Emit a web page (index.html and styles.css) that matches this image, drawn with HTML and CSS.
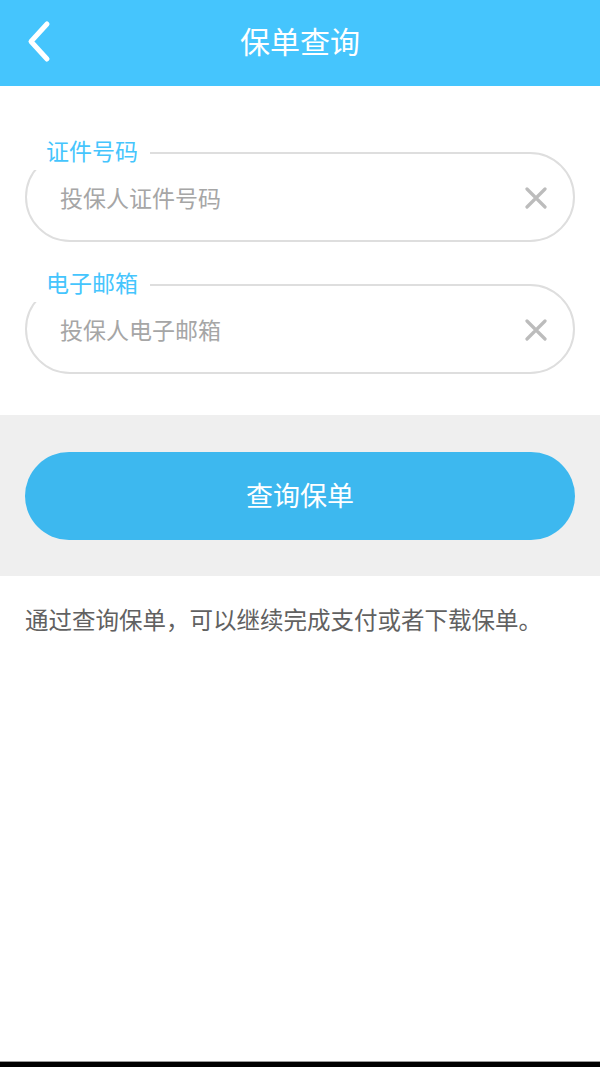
FILE: index.html
```html
<!DOCTYPE html>
<html>
<head>
    <meta charset="utf-8">
    <title>保单查询</title>
    <link rel="stylesheet" href="styles.css">
</head>
<body>
    <div class="page">
        <div class="header">
            <a class="back" href="#">
                <svg width="30" height="44" viewBox="0 0 30 44">
                    <polyline points="20,4 4,21.5 20,39" fill="none" stroke="#fff" stroke-width="5" stroke-linecap="round" stroke-linejoin="round"/>
                </svg>
            </a>
            <h1>保单查询</h1>
        </div>

        <div class="form-area">
            <div class="field">
                <label class="field-label" for="id-number">证件号码</label>
                <div class="pill">
                    <input type="text" id="id-number" placeholder="投保人证件号码">
                    <span class="clear">
                        <svg width="22" height="22" viewBox="0 0 22 22">
                            <path d="M2 2 L20 20 M20 2 L2 20" stroke="#bcbcbc" stroke-width="3.2" stroke-linecap="round"/>
                        </svg>
                    </span>
                </div>
            </div>
            <div class="field">
                <label class="field-label" for="email">电子邮箱</label>
                <div class="pill">
                    <input type="text" id="email" placeholder="投保人电子邮箱">
                    <span class="clear">
                        <svg width="22" height="22" viewBox="0 0 22 22">
                            <path d="M2 2 L20 20 M20 2 L2 20" stroke="#bcbcbc" stroke-width="3.2" stroke-linecap="round"/>
                        </svg>
                    </span>
                </div>
            </div>
        </div>

        <div class="button-area">
            <button class="query-button">查询保单</button>
        </div>

        <p class="tip">通过查询保单，可以继续完成支付或者下载保单。</p>

        <div class="spacer"></div>
        <div class="nav-bar"></div>
    </div>
</body>
</html>
```

FILE: styles.css
```css
body {
    margin: 0;
    padding: 0;
    font-family: "Noto Sans CJK SC", "Noto Sans", sans-serif;
    background-color: #fff;
}

.page {
    height: 1067px;
    display: flex;
    flex-direction: column;
}

.header {
    height: 86px;
    background-color: #45c5fd;
    display: flex;
    align-items: center;
    justify-content: center;
    position: relative;
}

.header h1 {
    margin: 0;
    color: #fff;
    font-size: 30px;
    font-weight: normal;
    line-height: 1;
    margin-top: -6px;
}

.back {
    position: absolute;
    left: 27px;
    top: 20px;
    display: block;
}

.back svg {
    display: block;
}

.form-area {
    padding: 66px 25px 41px 25px;
    display: flex;
    flex-direction: column;
    gap: 42px;
}

.field {
    position: relative;
}

.field-label {
    position: absolute;
    left: -2px;
    top: -16px;
    padding: 0 12px 0 23px;
    height: 34px;
    line-height: 28px;
    font-size: 23px;
    color: #45c5fd;
    background-color: #fff;
}

.pill {
    height: 86px;
    border: 2px solid #dedede;
    border-radius: 45px;
    display: flex;
    align-items: center;
    padding: 0 26px 0 33px;
}

.pill input {
    flex: 1;
    border: none;
    outline: none;
    background: transparent;
    font-family: inherit;
    font-size: 23px;
    color: #333;
    padding: 0;
    margin-top: 0;
}

.pill input::placeholder {
    color: #a6a6a6;
}

.clear {
    display: block;
    width: 22px;
    height: 22px;
    margin-top: 2px;
}

.clear svg {
    display: block;
}

.button-area {
    background-color: #efefef;
    padding: 37px 25px 36px 25px;
}

.query-button {
    width: 100%;
    height: 88px;
    border: none;
    border-radius: 44px;
    background-color: #3db8ef;
    color: #fff;
    font-family: inherit;
    font-size: 27px;
    cursor: pointer;
    padding: 0 0 4px 0;
}

.tip {
    margin: 0;
    padding: 27px 25px 0 25px;
    font-size: 23.5px;
    line-height: 32px;
    color: #616161;
}

.spacer {
    flex: 1;
}

.nav-bar {
    height: 5px;
    background-color: #000;
    border-top: 1px solid #999;
}
```
